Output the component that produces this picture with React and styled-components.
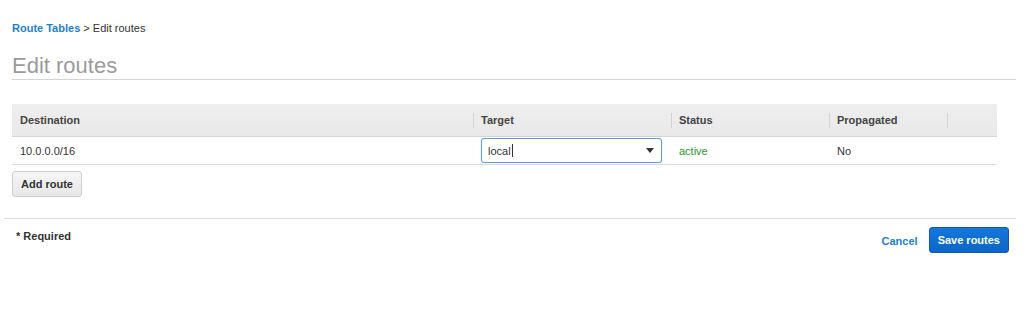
import React from "react";
import styled, { createGlobalStyle } from "styled-components";

const Global = createGlobalStyle`
  html, body { margin: 0; padding: 0; background: #fff; }
  body { font-family: "Liberation Sans", Arial, sans-serif; color: #333; }
`;

const Page = styled.div`
  padding: 0 8px 0 12px;
  width: 1024px;
  box-sizing: border-box;
`;

const Breadcrumb = styled.div`
  padding-top: 21px;
  font-size: 11px;
  line-height: 14px;
  color: #333;
`;

const Crumb = styled.a`
  color: #1b7fd6;
  font-weight: bold;
  text-decoration: none;
`;

const Title = styled.h1`
  margin: 18px 0 0;
  font-size: 22px;
  line-height: 26px;
  font-weight: normal;
  color: #9b9b9b;
  border-bottom: 1px solid #d4d4d4;
`;

const Table = styled.div`
  margin-top: 24px;
  width: 985px;
`;

const cols = "461px 198px 158px 118px 50px";

const HeadRow = styled.div`
  display: grid;
  grid-template-columns: ${cols};
  height: 33px;
  background: linear-gradient(#eeeeee, #e9e9e9);
  border-bottom: 1px solid #d6d6d6;
  box-sizing: border-box;
`;

const HeadCell = styled.div`
  display: flex;
  align-items: center;
  padding-left: 8px;
  font-size: 11px;
  font-weight: bold;
  color: #444;
  position: relative;
  &::before {
    content: "";
    display: ${(p) => (p.$first ? "none" : "block")};
    position: absolute;
    left: 0;
    top: 9px;
    height: 15px;
    width: 1px;
    background: #d3d3d3;
  }
`;

const BodyRow = styled.div`
  display: grid;
  grid-template-columns: ${cols};
  height: 28px;
  border-bottom: 1px solid #dcdcdc;
  box-sizing: border-box;
`;

const Cell = styled.div`
  display: flex;
  align-items: center;
  padding-left: 8px;
  font-size: 11px;
  color: ${(p) => (p.$status ? "#1d9a2a" : "#333")};
`;

const Select = styled.div`
  width: 181px;
  height: 25px;
  box-sizing: border-box;
  border: 1px solid #5c9ee6;
  border-radius: 3px;
  box-shadow: 0 0 1px rgba(70, 140, 230, 0.4);
  display: flex;
  align-items: center;
  justify-content: space-between;
  padding: 0 6px;
  font-size: 11px;
  color: #333;
  background: #fff;
`;

const Value = styled.span`
  display: flex;
  align-items: center;
`;

const Caret = styled.span`
  display: block;
  width: 1px;
  height: 13px;
  background: #333;
  margin-left: 1px;
`;

const Arrow = styled.span`
  width: 0;
  height: 0;
  border-left: 4.5px solid transparent;
  border-right: 4.5px solid transparent;
  border-top: 5px solid #333;
  margin-right: 1px;
`;

const Button = styled.button`
  font-family: "Liberation Sans", Arial, sans-serif;
  font-size: 11px;
  font-weight: bold;
  height: 26px;
  padding: 0 8px;
  border-radius: 3px;
  cursor: pointer;
  color: ${(p) => (p.$primary ? "#fff" : "#333")};
  background: ${(p) =>
    p.$primary
      ? "linear-gradient(#1577da, #0b66c8)"
      : "linear-gradient(#f6f6f6, #e7e7e7)"};
  border: 1px solid ${(p) => (p.$primary ? "#0a5cb4" : "#cfcfcf")};
`;

const AddWrap = styled.div`
  margin-top: 6px;
  display: flex;
`;

const Footer = styled.div`
  margin: 21px 0 0 -8px;
  border-top: 1px solid #dddddd;
  display: flex;
  justify-content: space-between;
  align-items: flex-start;
  padding: 8px 7px 0 12px;
`;

const Required = styled.div`
  margin-top: 3px;
  font-size: 11px;
  font-weight: bold;
  color: #333;
`;

const Actions = styled.div`
  display: flex;
  align-items: center;
  gap: 11px;
`;

const LinkButton = styled.a`
  font-size: 11px;
  font-weight: bold;
  color: #1b7fd6;
  margin-top: 1px;
`;

export default function App() {
  return (
    <>
      <Global />
      <Page>
        <Breadcrumb>
          <Crumb>Route Tables</Crumb> &gt; Edit routes
        </Breadcrumb>
        <Title>Edit routes</Title>
        <Table>
          <HeadRow>
            <HeadCell $first>Destination</HeadCell>
            <HeadCell>Target</HeadCell>
            <HeadCell>Status</HeadCell>
            <HeadCell>Propagated</HeadCell>
            <HeadCell />
          </HeadRow>
          <BodyRow>
            <Cell>10.0.0.0/16</Cell>
            <Cell>
              <Select>
                <Value>
                  local<Caret />
                </Value>
                <Arrow />
              </Select>
            </Cell>
            <Cell $status>active</Cell>
            <Cell>No</Cell>
            <Cell />
          </BodyRow>
        </Table>
        <AddWrap>
          <Button>Add route</Button>
        </AddWrap>
        <Footer>
          <Required>* Required</Required>
          <Actions>
            <LinkButton>Cancel</LinkButton>
            <Button $primary>Save routes</Button>
          </Actions>
        </Footer>
      </Page>
    </>
  );
}
